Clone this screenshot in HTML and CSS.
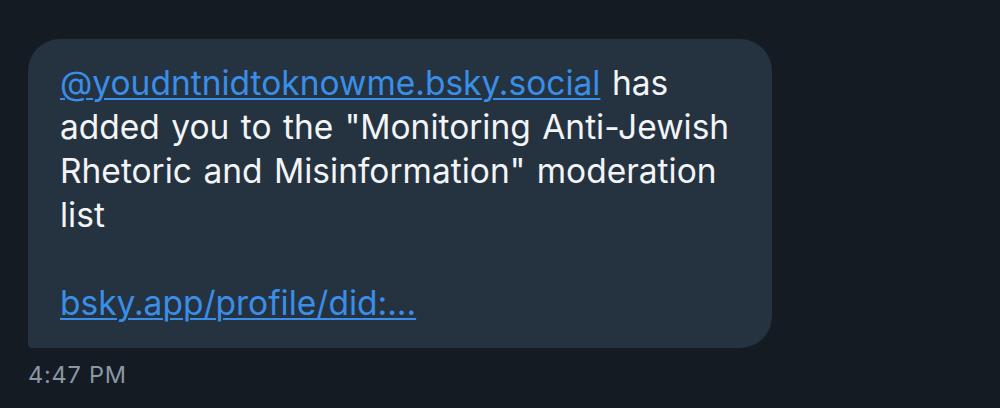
FILE: index.html
```html
<!DOCTYPE html>
<html>
<head>
<meta charset="utf-8">
<link rel="stylesheet" href="styles.css">
</head>
<body>
<div class="thread">
  <div class="bubble">
    <p class="msg"><a class="link" href="#">@youdntnidtoknowme.bsky.social</a> has added you to the "Monitoring Anti-Jewish Rhetoric and Misinformation" moderation list</p>
    <p class="msg spacer">&nbsp;</p>
    <p class="msg"><a class="link" href="#">bsky.app/profile/did:...</a></p>
  </div>
  <div class="time">4:47 PM</div>
</div>
</body>
</html>
```
FILE: styles.css
```css
html, body {
  margin: 0;
  padding: 0;
  background: #151b23;
  width: 1000px;
  height: 408px;
  overflow: hidden;
}
.thread {
  padding: 39px 0 0 28px;
  display: flex;
  flex-direction: column;
  align-items: flex-start;
  font-family: Inter, "Noto Sans", sans-serif;
}
.bubble {
  width: 744px;
  box-sizing: border-box;
  height: 309px;
  background: #253341;
  border-radius: 32px 32px 32px 4px;
  padding: 22px 36px 0 32px;
}
.msg {
  margin: 0;
  font-size: 33.5px;
  line-height: 44px;
  color: #f2f4f6;
  letter-spacing: 0;
  word-spacing: 2px;
}
.link {
  color: #3a8ee8;
  text-decoration: underline;
  text-decoration-thickness: 2px;
  text-underline-offset: 3px;
}
.time {
  margin-top: 12px;
  font-size: 23.5px;
  letter-spacing: 0.8px;
  color: #8b97a4;
}
```
